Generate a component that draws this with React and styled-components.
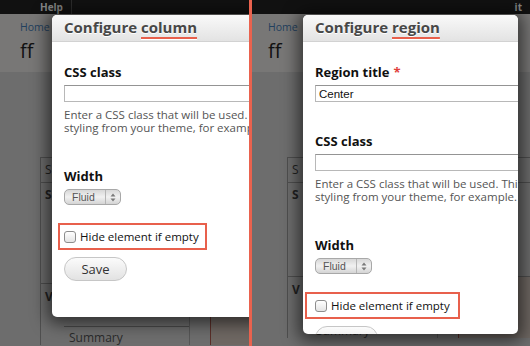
import React from "react";
import styled, { createGlobalStyle } from "styled-components";

const GlobalStyle = createGlobalStyle`
  html, body {
    margin: 0;
    padding: 0;
  }
  body {
    width: 530px;
    height: 346px;
    overflow: hidden;
    background: #6d6d6d;
    font-family: "Open Sans", "DejaVu Sans", sans-serif;
  }
`;

const Screen = styled.div`
  display: flex;
  width: 530px;
  height: 346px;
  overflow: hidden;
`;

const Separator = styled.div`
  flex: none;
  width: 3px;
  background: #e9624e;
`;

const Panel = styled.div`
  position: relative;
  flex: none;
  width: ${(p) => p.$width}px;
  height: 346px;
  overflow: hidden;
  display: flex;
  flex-direction: column;
  background: #6d6d6d;
`;

// --- page behind the dialog ---

const TopBar = styled.div`
  flex: none;
  height: 14px;
  background: #111;
  display: flex;
  justify-content: ${(p) => (p.$end ? "flex-end" : "flex-start")};
  padding: 0 ${(p) => p.$padRight || 0}px 0 ${(p) => p.$padLeft || 0}px;
`;

const TopLink = styled.span`
  font-size: 10px;
  font-weight: 700;
  line-height: 14px;
  color: #858585;
  padding-right: 8px;
  border-right: ${(p) => (p.$divider ? "1px solid #2c2c2c" : "none")};
`;

const PageHeader = styled.div`
  flex: none;
  height: 58px;
  box-sizing: border-box;
  padding: 6px 0 0 ${(p) => p.$pad}px;
  background: #787776;
`;

const Breadcrumb = styled.div`
  font-size: 10.5px;
  line-height: 14px;
  color: #22405e;
`;

const PageTitle = styled.div`
  margin-top: 5px;
  font-size: 20px;
  line-height: 24px;
  color: #111;
`;

const PageContent = styled.div`
  flex: 1;
  padding: 85px 0 0 ${(p) => p.$pad}px;
`;

const Table = styled.div`
  border-left: 1px solid #4f4f4f;
  display: flex;
  flex-direction: column;
`;

const Row = styled.div`
  height: ${(p) => p.$height}px;
  border-top: 1px solid #4f4f4f;
  box-sizing: border-box;
  padding: 5px 0 0 4px;
  font-size: 12px;
  font-weight: ${(p) => (p.$bold ? 700 : 400)};
  line-height: 14px;
  color: #222;
`;

const LastRow = styled.div`
  flex: 1;
  height: 80px;
  border-top: 1px solid #4f4f4f;
  display: grid;
  grid-template-columns: ${(p) => p.$first}px 21px 1fr;
`;

const FirstCell = styled.div`
  padding: 6px 0 0 4px;
  font-size: 12px;
  font-weight: 700;
  line-height: 14px;
  color: #222;
`;

const SubTable = styled.div`
  margin: 22px 0 0 19px;
  border-top: 1px solid #4a4a4a;
  padding: 4px 0 0 5px;
  font-size: 12px;
  font-weight: 400;
  color: #2a2a2a;
`;

const LineCell = styled.div`
  border-left: 1px solid ${(p) => (p.$red ? "#5a2e28" : "#565656")};
  background: ${(p) => (p.$tint ? "#6e6762" : "transparent")};
`;

// --- dialog ---

const Modal = styled.div`
  position: absolute;
  top: 15px;
  left: ${(p) => p.$left}px;
  width: 215px;
  height: ${(p) => p.$height}px;
  background: #fff;
  border-radius: 5px;
  box-shadow: 0 2px 16px 5px rgba(0, 0, 0, 0.55);
  overflow: hidden;
  display: flex;
  flex-direction: column;
`;

const ModalHeader = styled.div`
  flex: none;
  height: 27px;
  box-sizing: border-box;
  padding: 0 0 2px 12px;
  background: linear-gradient(#f9f9f9, #e3e3e3);
  border-bottom: 1px solid #d2d2d2;
`;

const ModalTitle = styled.h2`
  margin: 0;
  font-size: 15px;
  font-weight: 700;
  line-height: 25px;
  color: #474747;
  text-shadow: 0 1px 0 #fff;
  white-space: nowrap;
`;

const Marked = styled.span`
  text-decoration: underline;
  text-decoration-color: #e8604c;
  text-decoration-thickness: 2px;
  text-underline-offset: 4px;
  text-decoration-skip-ink: none;
`;

const ModalBody = styled.div`
  padding: 22px 12px 0;
  display: flex;
  flex-direction: column;
  align-items: flex-start;
`;

const FormItem = styled.div`
  display: flex;
  flex-direction: column;
  align-items: flex-start;
  margin-bottom: ${(p) => p.$after}px;
`;

const Label = styled.label`
  font-size: 13px;
  font-weight: 700;
  line-height: 16px;
  color: #111;
  margin-bottom: 5px;
`;

const Required = styled.span`
  color: #e0403a;
  margin-left: 4px;
`;

const TextInput = styled.input`
  width: 270px;
  height: 17px;
  box-sizing: border-box;
  margin: 0;
  padding: 0 3px;
  border: 1px solid #b8b8b8;
  border-top-color: #949494;
  border-radius: 0;
  font-family: "Liberation Sans", Arial, sans-serif;
  font-size: 11.5px;
  color: #111;
  outline: none;
`;

const Description = styled.div`
  margin-top: 6px;
  font-size: 11.5px;
  line-height: 13px;
  color: #555;
  white-space: nowrap;
`;

const Select = styled.div`
  width: 57px;
  height: 16px;
  box-sizing: border-box;
  display: flex;
  align-items: stretch;
  border: 1px solid #a8a8a8;
  border-radius: 5px;
  background: linear-gradient(#d7d7d7, #f1f1f1 50%, #d4d4d4);
  font-family: "Liberation Sans", Arial, sans-serif;
  font-size: 10.5px;
  color: #555;
`;

const SelectValue = styled.span`
  flex: 1;
  padding-left: 7px;
  line-height: 14px;
`;

const SelectArrows = styled.span`
  width: 14px;
  border-left: 1px solid #b5b5b5;
  display: flex;
  align-items: center;
  justify-content: center;
`;

const Highlight = styled.div`
  width: ${(p) => p.$width}px;
  box-sizing: border-box;
  margin-left: -${(p) => p.$inset}px;
  padding: 5px 0 5px ${(p) => p.$inset - 2}px;
  border: 2px solid #e8604c;
  display: flex;
  align-items: center;
`;

const Checkbox = styled.span`
  width: 12px;
  height: 12px;
  box-sizing: border-box;
  margin-right: 4px;
  border: 1px solid #8d8d8d;
  border-radius: 3px;
  background: linear-gradient(#fff, #e4e4e4);
`;

const CheckLabel = styled.span`
  font-size: 11.5px;
  line-height: 13px;
  color: #111;
`;

const SaveButton = styled.button`
  margin-top: 7px;
  width: 63px;
  height: 24px;
  padding: 0;
  border: 1px solid #c6c6c6;
  border-radius: 12px;
  background: linear-gradient(#fbfbfb, #e2e2e2);
  font-family: "Open Sans", "DejaVu Sans", sans-serif;
  font-size: 13px;
  color: #333;
`;

const Arrows = () => (
  <svg width="6" height="9" viewBox="0 0 6 9">
    <path d="M3 0.5 L5.5 3.5 H0.5 Z M3 8.5 L5.5 5.5 H0.5 Z" fill="#7a7a7a" />
  </svg>
);

const WidthField = () => (
  <FormItem $after={18}>
    <Label>Width</Label>
    <Select>
      <SelectValue>Fluid</SelectValue>
      <SelectArrows>
        <Arrows />
      </SelectArrows>
    </Select>
  </FormItem>
);

const CssClassField = ({ after }) => (
  <FormItem $after={after}>
    <Label>CSS class</Label>
    <TextInput readOnly value="" />
    <Description>
      Enter a CSS class that will be used. This class can be used to apply
      <br />
      styling from your theme, for example.
    </Description>
  </FormItem>
);

const HideToggle = ({ width, inset }) => (
  <Highlight $width={width} $inset={inset}>
    <Checkbox />
    <CheckLabel>Hide element if empty</CheckLabel>
  </Highlight>
);

const BackgroundPage = ({ pad, tablePad, rowB, first, topBar }) => (
  <>
    {topBar}
    <PageHeader $pad={pad}>
      <Breadcrumb>Home</Breadcrumb>
      <PageTitle>ff</PageTitle>
    </PageHeader>
    <PageContent $pad={tablePad}>
      <Table>
        <Row $height={25}>S</Row>
        <Row $height={rowB} $bold>
          S
        </Row>
        <LastRow $first={first}>
          <FirstCell>
            V<SubTable>Summary</SubTable>
          </FirstCell>
          <LineCell />
          <LineCell $red $tint />
        </LastRow>
      </Table>
    </PageContent>
  </>
);

const App = () => (
  <>
    <GlobalStyle />
    <Screen>
      <Panel $width={249}>
        <BackgroundPage
          pad={20}
          tablePad={40}
          rowB={101}
          first={148}
          topBar={
            <TopBar $padLeft={40}>
              <TopLink $divider>Help</TopLink>
            </TopBar>
          }
        />
        <Modal $left={52} $height={302}>
          <ModalHeader>
            <ModalTitle>
              Configure <Marked>column</Marked>
            </ModalTitle>
          </ModalHeader>
          <ModalBody>
            <CssClassField after={34} />
            <WidthField />
            <HideToggle width={149} inset={6} />
            <SaveButton>Save</SaveButton>
          </ModalBody>
        </Modal>
      </Panel>
      <Separator />
      <Panel $width={278}>
        <BackgroundPage
          pad={16}
          tablePad={35}
          rowB={94}
          first={149}
          topBar={
            <TopBar $end $padRight={0}>
              <TopLink>it</TopLink>
            </TopBar>
          }
        />
        <Modal $left={51} $height={319}>
          <ModalHeader>
            <ModalTitle>
              Configure <Marked>region</Marked>
            </ModalTitle>
          </ModalHeader>
          <ModalBody>
            <FormItem $after={31}>
              <Label>
                Region title<Required>*</Required>
              </Label>
              <TextInput readOnly value="Center" />
            </FormItem>
            <CssClassField after={34} />
            <WidthField />
            <HideToggle width={155} inset={10} />
            <SaveButton>Save</SaveButton>
          </ModalBody>
        </Modal>
      </Panel>
    </Screen>
  </>
);

export default App;
